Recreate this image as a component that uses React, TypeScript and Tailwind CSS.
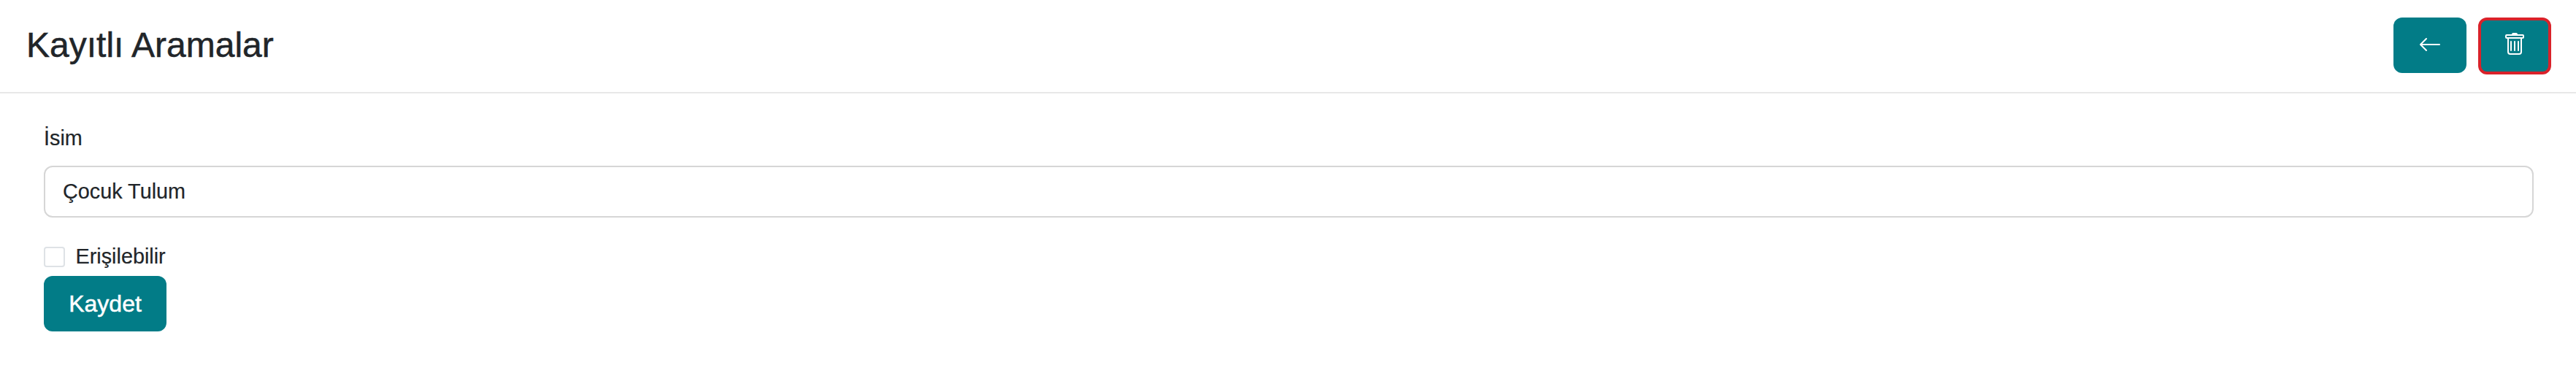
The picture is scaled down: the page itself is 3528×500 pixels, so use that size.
import React, { useState } from 'react';
import { BsArrowLeft } from 'react-icons/bs';

function TrashIcon() {
  return (
    <svg viewBox="0 0 16 16" fill="currentColor" className="size-8" aria-hidden="true">
      {/* ribs */}
      <path d="M5.5 5.5A.5.5 0 0 1 6 6v6a.5.5 0 0 1-1 0V6a.5.5 0 0 1 .5-.5m2.5 0a.5.5 0 0 1 .5.5v6a.5.5 0 0 1-1 0V6a.5.5 0 0 1 .5-.5m3 .5a.5.5 0 0 0-1 0v6a.5.5 0 0 0 1 0z" />
      {/* can and lid */}
      <path
        fillRule="evenodd"
        d="M14.5 3a1 1 0 0 1-1 1H13v9a2 2 0 0 1-2 2H5a2 2 0 0 1-2-2V4h-.5a1 1 0 0 1-1-1V2a1 1 0 0 1 1-1H6a1 1 0 0 1 1-1h2a1 1 0 0 1 1 1h3.5a1 1 0 0 1 1 1zM4 4v9a1 1 0 0 0 1 1h6a1 1 0 0 0 1-1V4zM2.5 3h11V2h-11z"
      />
    </svg>
  );
}

function PageHeader({ title }: { title: string }) {
  return (
    <header className="flex h-32 items-start justify-between border-b-2 border-[#e8e8e8] pl-9 pr-[34px]">
      <h1 className="pt-[33px] text-[48px] leading-[57px] text-[#212529] [-webkit-text-stroke:0.5px]">{title}</h1>

      {/* Actions */}
      <div className="flex items-start gap-4 pt-6">
        <button
          type="button"
          aria-label="Geri"
          className="flex h-[76px] w-[100px] justify-center rounded-xl bg-[#027c87] pt-[21px] text-white"
        >
          <BsArrowLeft className="size-8" />
        </button>
        <button
          type="button"
          aria-label="Sil"
          className="flex h-[78px] w-[100px] justify-center rounded-xl border-4 border-[#d9222a] bg-[#027c87] pt-[17px] text-white"
        >
          <TrashIcon />
        </button>
      </div>
    </header>
  );
}

export default function App() {
  const [name, setName] = useState('Çocuk Tulum');
  const [accessible, setAccessible] = useState(false);

  return (
    <div className="min-h-[500px] bg-white font-['Liberation_Sans',Arial,sans-serif] text-[28.8px] text-[#212529] [-webkit-text-stroke:0.2px]">
      <PageHeader title="Kayıtlı Aramalar" />

      <form className="flex flex-col items-start pl-[60px] pr-[58px] pt-10">
        <label htmlFor="name" className="leading-[43px]">
          İsim
        </label>
        <input
          id="name"
          type="text"
          value={name}
          onChange={(e) => setName(e.target.value)}
          className="mt-4 h-[71px] w-full rounded-xl border-2 border-[#d6d6d6] bg-white px-6"
        />

        <label className="mt-8 flex h-[43px] items-center gap-[14.5px] leading-[43px]">
          <input
            type="checkbox"
            checked={accessible}
            onChange={(e) => setAccessible(e.target.checked)}
            className="h-7 w-[29px] appearance-none rounded border-2 border-[#dee2e6] bg-white checked:bg-[#027c87]"
          />
          Erişilebilir
        </label>

        <button
          type="submit"
          className="mt-[5px] h-[76px] w-[168px] rounded-xl bg-[#027c87] text-[32px] text-white [-webkit-text-stroke:0.5px]"
        >
          Kaydet
        </button>
      </form>
    </div>
  );
}
